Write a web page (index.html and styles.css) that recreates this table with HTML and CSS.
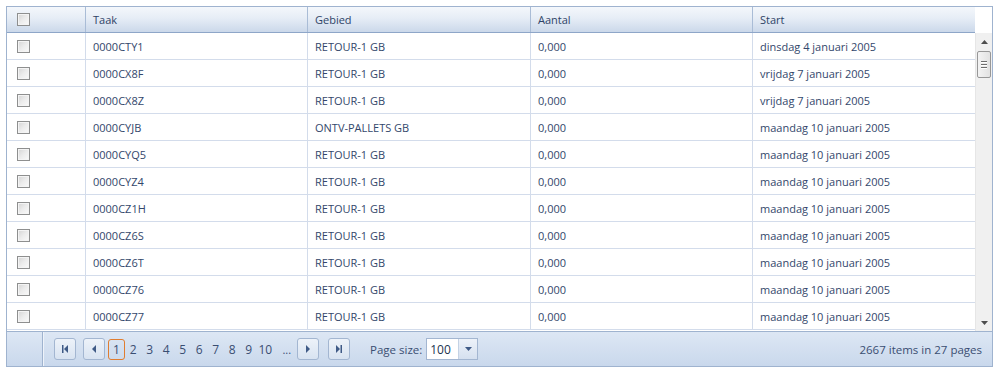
FILE: index.html
```html
<!DOCTYPE html>
<html>
<head>
<meta charset="utf-8">
<link rel="stylesheet" href="styles.css">
</head>
<body>
<div class="grid">
  <div class="head">
    <div class="hrow">
      <div class="hcell chk"><span class="cb"></span></div>
      <div class="hcell">Taak</div>
      <div class="hcell">Gebied</div>
      <div class="hcell">Aantal</div>
      <div class="hcell">Start</div>
    </div>
    <div class="hspacer"></div>
  </div>
  <div class="body">
    <div class="rows">
      <div class="row"><div class="cell chk"><span class="cb"></span></div><div class="cell">0000CTY1</div><div class="cell">RETOUR-1 GB</div><div class="cell">0,000</div><div class="cell">dinsdag 4 januari 2005</div></div>
      <div class="row"><div class="cell chk"><span class="cb"></span></div><div class="cell">0000CX8F</div><div class="cell">RETOUR-1 GB</div><div class="cell">0,000</div><div class="cell">vrijdag 7 januari 2005</div></div>
      <div class="row"><div class="cell chk"><span class="cb"></span></div><div class="cell">0000CX8Z</div><div class="cell">RETOUR-1 GB</div><div class="cell">0,000</div><div class="cell">vrijdag 7 januari 2005</div></div>
      <div class="row"><div class="cell chk"><span class="cb"></span></div><div class="cell">0000CYJB</div><div class="cell">ONTV-PALLETS GB</div><div class="cell">0,000</div><div class="cell">maandag 10 januari 2005</div></div>
      <div class="row"><div class="cell chk"><span class="cb"></span></div><div class="cell">0000CYQ5</div><div class="cell">RETOUR-1 GB</div><div class="cell">0,000</div><div class="cell">maandag 10 januari 2005</div></div>
      <div class="row"><div class="cell chk"><span class="cb"></span></div><div class="cell">0000CYZ4</div><div class="cell">RETOUR-1 GB</div><div class="cell">0,000</div><div class="cell">maandag 10 januari 2005</div></div>
      <div class="row"><div class="cell chk"><span class="cb"></span></div><div class="cell">0000CZ1H</div><div class="cell">RETOUR-1 GB</div><div class="cell">0,000</div><div class="cell">maandag 10 januari 2005</div></div>
      <div class="row"><div class="cell chk"><span class="cb"></span></div><div class="cell">0000CZ6S</div><div class="cell">RETOUR-1 GB</div><div class="cell">0,000</div><div class="cell">maandag 10 januari 2005</div></div>
      <div class="row"><div class="cell chk"><span class="cb"></span></div><div class="cell">0000CZ6T</div><div class="cell">RETOUR-1 GB</div><div class="cell">0,000</div><div class="cell">maandag 10 januari 2005</div></div>
      <div class="row"><div class="cell chk"><span class="cb"></span></div><div class="cell">0000CZ76</div><div class="cell">RETOUR-1 GB</div><div class="cell">0,000</div><div class="cell">maandag 10 januari 2005</div></div>
      <div class="row"><div class="cell chk"><span class="cb"></span></div><div class="cell">0000CZ77</div><div class="cell">RETOUR-1 GB</div><div class="cell">0,000</div><div class="cell">maandag 10 januari 2005</div></div>
    </div>
    <div class="scrollbar">
      <div class="sb-btn"><svg width="7" height="4" viewBox="0 0 7 4"><path d="M0 4 L3.5 0 L7 4 Z" fill="#4d4d4d"/></svg></div>
      <div class="sb-track">
        <div class="sb-thumb"><span></span><span></span><span></span></div>
      </div>
      <div class="sb-btn"><svg width="7" height="4" viewBox="0 0 7 4"><path d="M0 0 L3.5 4 L7 0 Z" fill="#4d4d4d"/></svg></div>
    </div>
  </div>
  <div class="pager">
    <div class="pager-lead"></div>
    <div class="pager-main">
      <div class="nav">
        <span class="pbtn"><svg width="8" height="8" viewBox="0 0 8 8"><rect x="1" y="0" width="1.5" height="8" fill="#3f5a86"/><path d="M7 0 L3 4 L7 8 Z" fill="#3f5a86"/></svg></span>
        <span class="pbtn"><svg width="8" height="8" viewBox="0 0 8 8"><path d="M6 0 L2 4 L6 8 Z" fill="#3f5a86"/></svg></span>
        <div class="pages">
          <span class="pg cur">1</span><span class="pg">2</span><span class="pg">3</span><span class="pg">4</span><span class="pg">5</span><span class="pg">6</span><span class="pg">7</span><span class="pg">8</span><span class="pg">9</span><span class="pg">10</span><span class="pg more">...</span>
        </div>
        <span class="pbtn"><svg width="8" height="8" viewBox="0 0 8 8"><path d="M2 0 L6 4 L2 8 Z" fill="#3f5a86"/></svg></span>
        <span class="pbtn last"><svg width="8" height="8" viewBox="0 0 8 8"><path d="M1 0 L5 4 L1 8 Z" fill="#3f5a86"/><rect x="5.5" y="0" width="1.5" height="8" fill="#3f5a86"/></svg></span>
      </div>
      <div class="psize">
        <span class="plabel">Page size:</span>
        <span class="dd"><span class="dd-val">100</span><span class="dd-btn"><svg width="7" height="4" viewBox="0 0 7 4"><path d="M0 0 L3.5 4 L7 0 Z" fill="#3f5a86"/></svg></span></span>
      </div>
      <div class="pinfo">2667 items in 27 pages</div>
    </div>
  </div>
</div>
</body>
</html>
```

FILE: styles.css
```css
html, body {
  margin: 0;
  padding: 0;
  background: #ffffff;
}
body {
  padding: 6px 0 0 6px;
  font-family: "Open Sans", "Noto Sans", sans-serif;
  font-size: 11px;
  color: #33476b;
}
.grid {
  width: 985px;
  border: 1px solid #9fb3cf;
  background: #fff;
}
.head {
  display: flex;
}
.hrow {
  display: grid;
  grid-template-columns: 78px 222px 223px 222px 223px;
  height: 25px;
  border-bottom: 1px solid #8ea6c8;
  background: linear-gradient(#f4f7fb 0%, #e6edf6 45%, #cbd8ea 100%);
}
.hspacer {
  width: 17px;
  background: #fff;
}
.hcell {
  display: flex;
  align-items: center;
  padding-left: 7px;
  border-left: 1px solid #a9bcd6;
  color: #2f4467;
}
.hcell.chk {
  border-left: none;
  padding-left: 10px;
}
.body {
  display: flex;
  height: 298px;
}
.rows {
  width: 968px;
  overflow: hidden;
}
.row {
  display: grid;
  grid-template-columns: 78px 222px 223px 222px 223px;
  height: 26px;
  border-bottom: 1px solid #d3dceb;
}
.cell {
  display: flex;
  align-items: center;
  padding-left: 7px;
  padding-top: 1px;
  border-left: 1px solid #d3dceb;
  white-space: nowrap;
}
.cell.chk {
  border-left: none;
  padding-left: 10px;
  padding-top: 0;
}
.cb {
  display: inline-block;
  width: 11px;
  height: 11px;
  border: 1px solid #8e8f8f;
  background: linear-gradient(135deg, #d4d4d4 0%, #ececec 50%, #fafafa 100%);
  box-shadow: inset 0 0 0 1px #f4f4f4;
}
.scrollbar {
  width: 17px;
  display: flex;
  flex-direction: column;
  background: #f0f0f0;
  border-left: 1px solid #e6e6e6;
  box-sizing: border-box;
}
.sb-btn {
  height: 17px;
  display: flex;
  align-items: center;
  justify-content: center;
}
.sb-track {
  flex: 1;
  padding: 1px 1px 0 1px;
}
.sb-thumb {
  height: 25px;
  border: 1px solid #979797;
  border-radius: 2px;
  background: linear-gradient(90deg, #f3f3f3, #e2e2e2);
  display: flex;
  flex-direction: column;
  align-items: center;
  justify-content: center;
  gap: 2px;
}
.sb-thumb span {
  width: 6px;
  height: 1px;
  background: #6e6e6e;
  box-shadow: 0 1px 0 #fff;
}
.pager {
  display: flex;
  height: 34px;
  border-top: 1px solid #9fb3cf;
  background: linear-gradient(#dde7f4, #c9d8ec);
}
.pager-lead {
  width: 35px;
  border-right: 1px solid #9fb3cf;
  box-shadow: 1px 0 0 #eef3fa;
}
.pager-main {
  flex: 1;
  display: flex;
  align-items: center;
  padding-left: 11px;
  padding-right: 10px;
  color: #3a4e72;
}
.nav {
  display: flex;
  align-items: center;
}
.pbtn {
  width: 20px;
  height: 20px;
  border: 1px solid #a3b6d1;
  border-radius: 3px;
  background: linear-gradient(#edf2f9, #d8e3f1);
  display: inline-flex;
  align-items: center;
  justify-content: center;
  margin-right: 7px;
}
.pbtn.last {
  margin-right: 0;
  margin-left: 2px;
}
.pages {
  display: flex;
  align-items: center;
  margin-left: -4px;
  margin-right: 0;
}
.pg {
  font-size: 12px;
  min-width: 15px;
  text-align: center;
  padding: 0 0.75px;
  line-height: 19px;
  color: #3a4e72;
}
.pg.cur {
  border: 1px solid #e07d30;
  border-radius: 3px;
  width: 13px;
  min-width: 13px;
  padding: 0 1px;
  margin-right: 0;
}
.pg.more {
  font-size: 11px;
  margin-left: 5px;
  margin-right: 2px;
}
.psize {
  display: flex;
  align-items: center;
  margin-left: 20px;
}
.plabel {
  font-size: 11.5px;
  margin-right: 4px;
}
.dd {
  display: inline-flex;
  width: 50px;
  height: 20px;
  border: 1px solid #a3b6d1;
  background: #fff;
}
.dd-val {
  flex: 1;
  display: flex;
  align-items: center;
  padding-left: 3px;
  font-size: 12px;
  color: #22334f;
}
.dd-btn {
  width: 18px;
  display: flex;
  align-items: center;
  justify-content: center;
  border-left: 1px solid #c4d2e4;
  background: linear-gradient(#edf2f9, #d5e0ef);
}
.pinfo {
  margin-left: auto;
  font-size: 11.5px;
  color: #3a4e72;
}
```
